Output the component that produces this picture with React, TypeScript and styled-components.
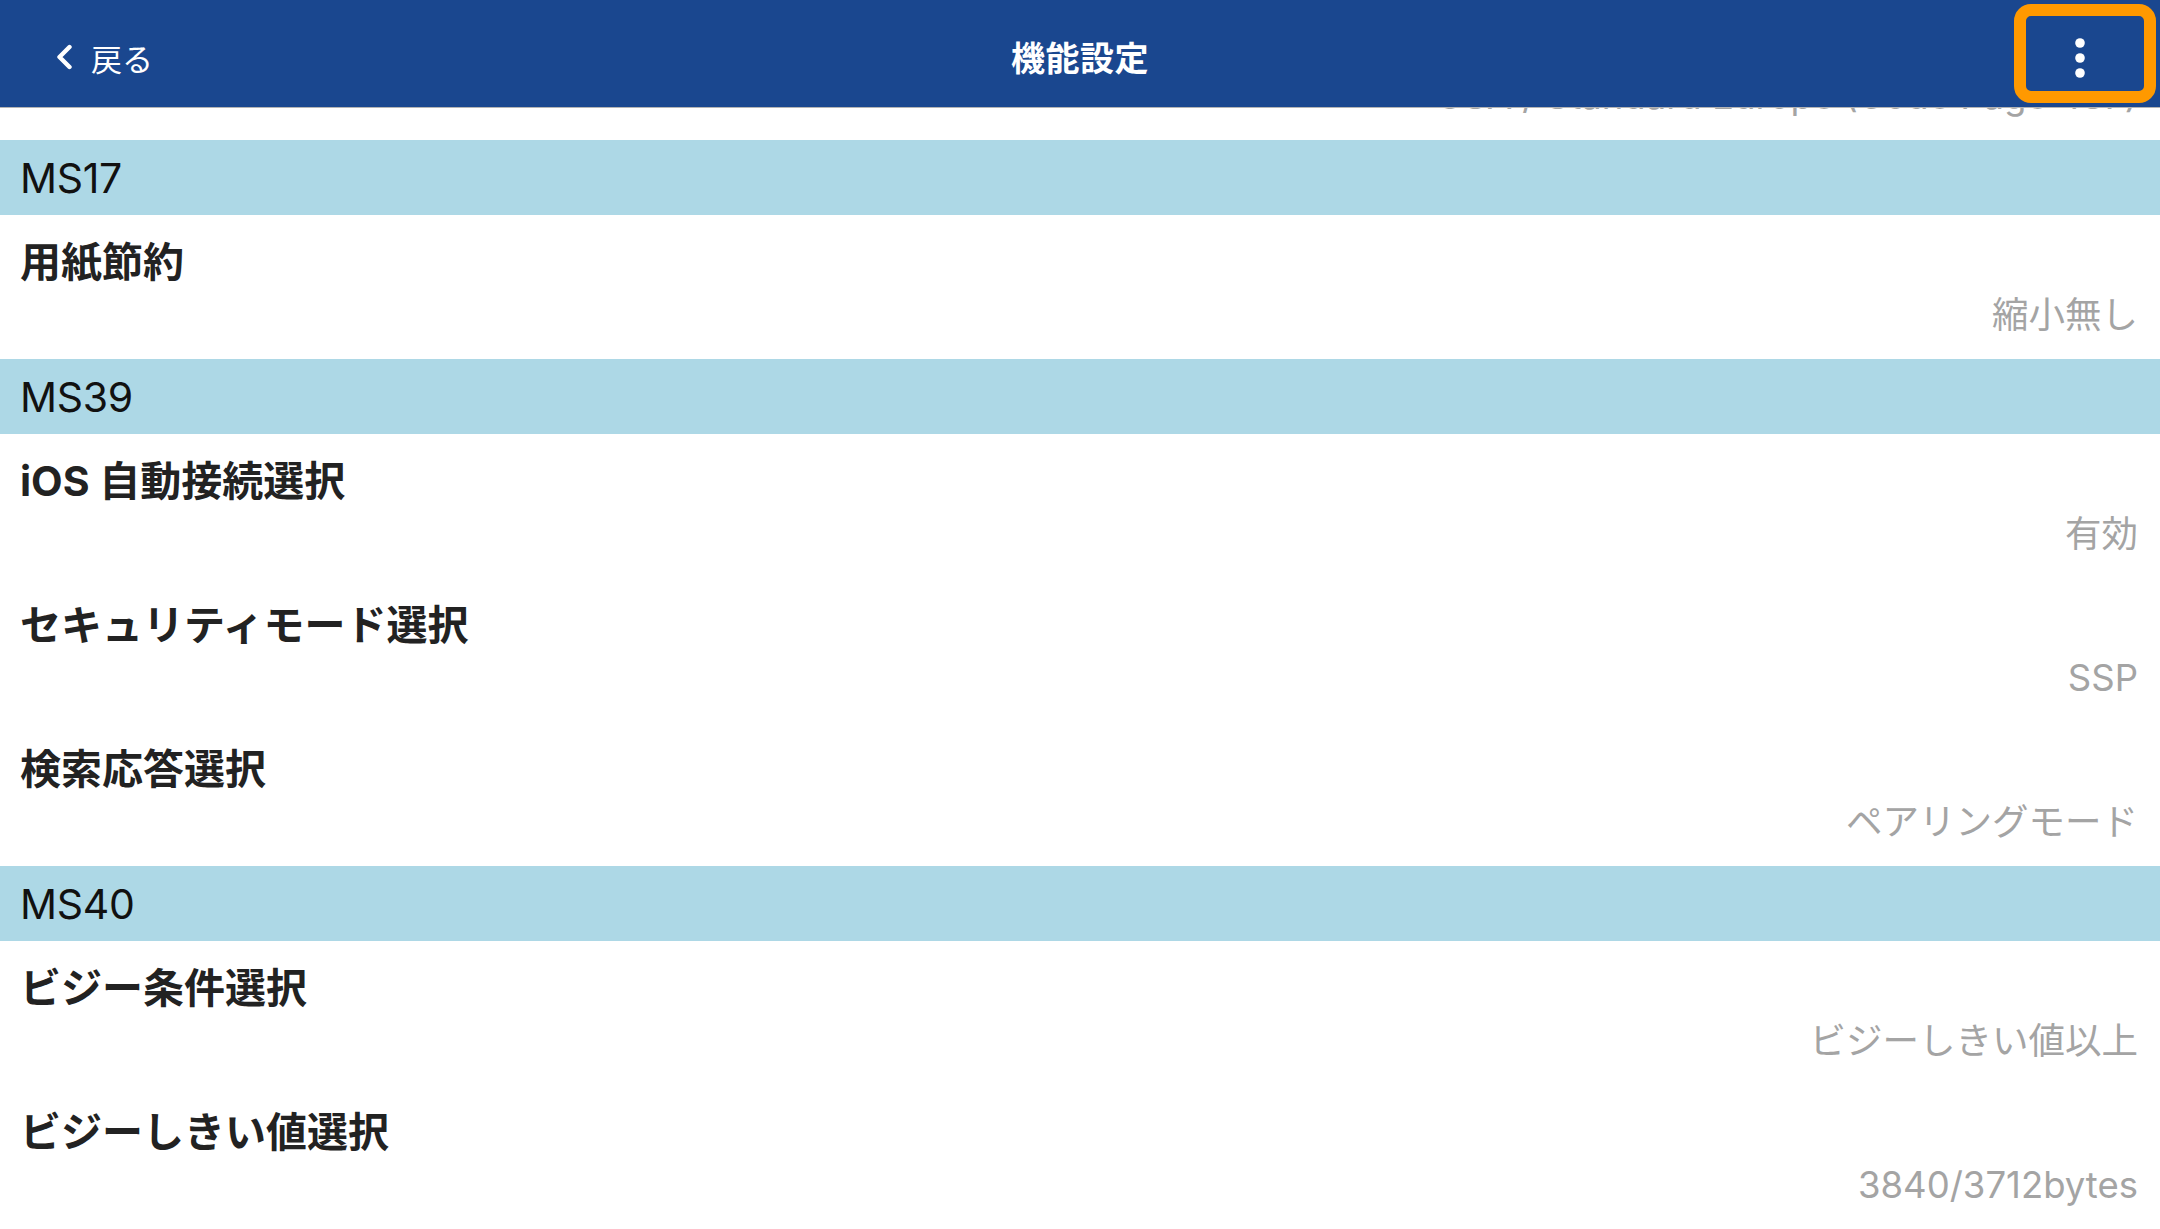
import React from "react";
import styled, { createGlobalStyle } from "styled-components";

const GlobalStyle = createGlobalStyle`
  html, body, #root {
    margin: 0;
    padding: 0;
    height: 100%;
  }
  body {
    font-family: "Inter", "Noto Sans CJK JP", sans-serif;
    background: #ffffff;
    -webkit-font-smoothing: antialiased;
  }
`;

const Screen = styled.div`
  display: flex;
  flex-direction: column;
  height: 100vh;
  overflow: hidden;
  background: #ffffff;
`;

const NavBar = styled.header`
  position: relative;
  z-index: 2;
  flex-shrink: 0;
  display: grid;
  grid-template-columns: 1fr auto 1fr;
  align-items: center;
  height: 107px;
  background: #1a478f;
  border-bottom: 1px solid #b4b4b4;
  color: #ffffff;
`;

const BackButton = styled.button`
  justify-self: start;
  display: flex;
  align-items: center;
  gap: 18px;
  padding: 7px 0 0 55px;
  border: 0;
  background: none;
  color: #ffffff;
  font-family: inherit;
  font-size: 31px;
  cursor: pointer;
`;

const NavTitle = styled.h1`
  margin: 0;
  padding-top: 6px;
  font-size: 34px;
  font-weight: 700;
  letter-spacing: 0.5px;
`;

const MenuButton = styled.button`
  position: relative;
  justify-self: end;
  display: flex;
  align-items: center;
  justify-content: center;
  width: 60px;
  height: 60px;
  margin: 9px 50px 0 0;
  padding: 0;
  border: 0;
  background: none;
  cursor: pointer;
`;

// orange highlight drawn over the menu button
const Highlight = styled.span`
  position: absolute;
  left: -36px;
  top: -24px;
  width: 142px;
  height: 99px;
  box-sizing: border-box;
  border: 12px solid #ff9900;
  border-radius: 17px;
  pointer-events: none;
`;

const Scroller = styled.main`
  flex: 1;
  overflow: hidden;
`;

// list is scrolled: the first row sits mostly under the nav bar
const List = styled.div`
  margin-top: -112px;
`;

const SectionHeader = styled.div`
  display: flex;
  align-items: center;
  height: 75px;
  padding: 0 20px;
  background: #add8e6;
  color: #111111;
  font-size: 41px;
  letter-spacing: -0.3px;
`;

const Row = styled.div`
  box-sizing: border-box;
  height: 144px;
  padding: 23px 22px 0 20px;
`;

const RowTitle = styled.div`
  font-size: 41px;
  line-height: 48px;
  font-weight: 700;
  color: #222222;
`;

const RowValue = styled.div`
  margin-top: 7px;
  font-size: 36.5px;
  line-height: 44px;
  text-align: right;
  color: #a4a4a4;
`;

type Item = { label: string; value: string };
type Section = { code?: string; items: Item[] };

const sections: Section[] = [
  { items: [{ label: "コードページ選択", value: "USA / Standard Europe (Code Page 437)" }] },
  { code: "MS17", items: [{ label: "用紙節約", value: "縮小無し" }] },
  {
    code: "MS39",
    items: [
      { label: "iOS 自動接続選択", value: "有効" },
      { label: "セキュリティモード選択", value: "SSP" },
      { label: "検索応答選択", value: "ペアリングモード" },
    ],
  },
  {
    code: "MS40",
    items: [
      { label: "ビジー条件選択", value: "ビジーしきい値以上" },
      { label: "ビジーしきい値選択", value: "3840/3712bytes" },
    ],
  },
];

function Chevron() {
  return (
    <svg width="18" height="26" viewBox="0 0 18 26" fill="none">
      <polyline
        points="14.5,3 4.5,13 14.5,23"
        stroke="#ffffff"
        strokeWidth="4.4"
        strokeLinecap="round"
        strokeLinejoin="round"
      />
    </svg>
  );
}

function Kebab() {
  return (
    <svg width="60" height="60" viewBox="0 0 60 60">
      <circle cx="30" cy="15" r="4.8" fill="#ffffff" />
      <circle cx="30" cy="30" r="4.8" fill="#ffffff" />
      <circle cx="30" cy="45" r="4.8" fill="#ffffff" />
    </svg>
  );
}

export default function App() {
  return (
    <>
      <GlobalStyle />
      <Screen>
        <NavBar>
          <BackButton>
            <Chevron />
            <span>戻る</span>
          </BackButton>
          <NavTitle>機能設定</NavTitle>
          <MenuButton aria-label="メニュー">
            <Kebab />
            <Highlight />
          </MenuButton>
        </NavBar>

        <Scroller>
          <List>
            {sections.map((section, i) => (
              <React.Fragment key={i}>
                {section.code && <SectionHeader>{section.code}</SectionHeader>}
                {section.items.map((item) => (
                  <Row key={item.label}>
                    <RowTitle>{item.label}</RowTitle>
                    <RowValue>{item.value}</RowValue>
                  </Row>
                ))}
              </React.Fragment>
            ))}
          </List>
        </Scroller>
      </Screen>
    </>
  );
}
